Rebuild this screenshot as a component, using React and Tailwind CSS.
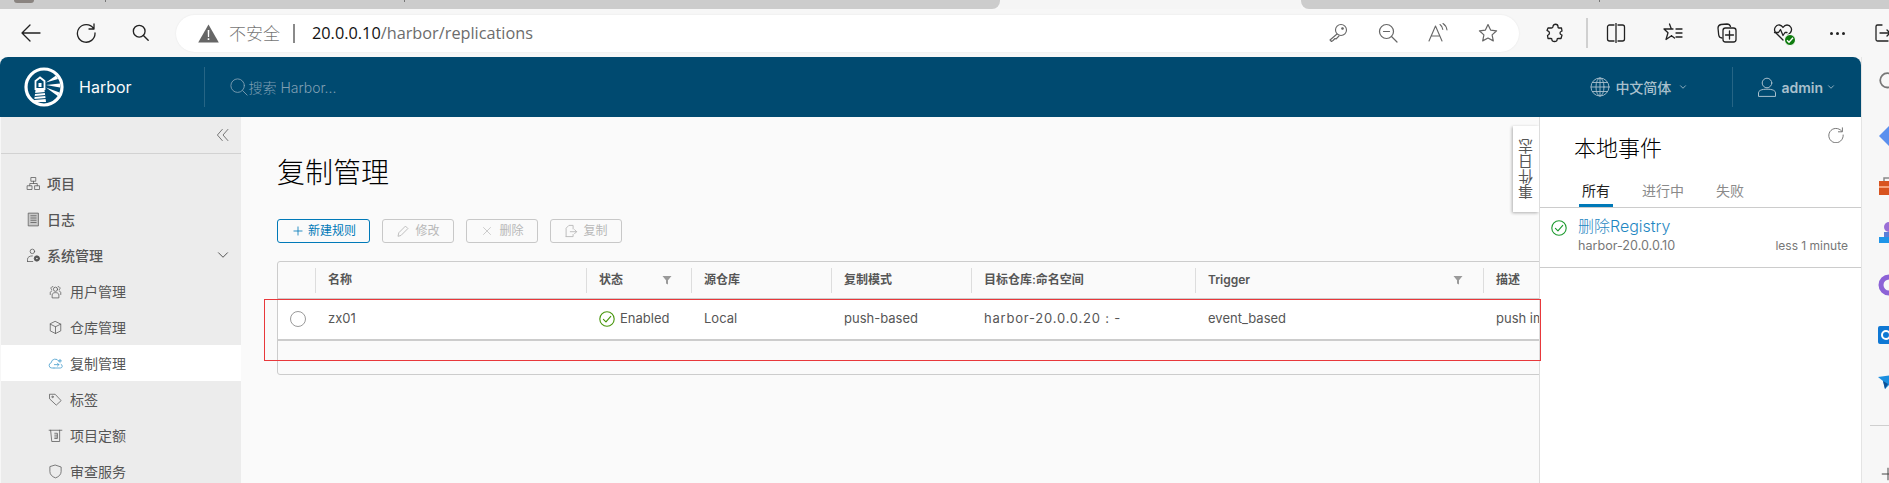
import { ChevronDown, Plus, X } from 'lucide-react';

const Ic = ({ size = 20, className = '', sw = 1.3, children }) => (
  <svg
    width={size}
    height={size}
    viewBox="0 0 20 20"
    fill="none"
    stroke="currentColor"
    strokeWidth={sw}
    strokeLinecap="round"
    strokeLinejoin="round"
    className={`shrink-0 ${className}`}
  >
    {children}
  </svg>
);

const StatusCheck = ({ className }) => (
  <Ic size={16} sw={1.4} className={className}>
    <circle cx="10" cy="10" r="9" />
    <path d="M5.5 10.5l3.2 3.2 6-7" />
  </Ic>
);

const FilterIcon = ({ className = '' }) => (
  <svg width="10" height="10" viewBox="0 0 10 10" className={`shrink-0 ${className}`}>
    <path d="M0.5 1h9L6 5.2V9.5L4 8.5V5.2z" fill="#9a9a9a" />
  </svg>
);

const Logo = () => (
  <svg width="40" height="40" viewBox="0 0 40 40" className="shrink-0">
    <circle cx="20" cy="20" r="18" fill="none" stroke="#fff" strokeWidth="3.2" />
    <path d="M11.5 14l4.5-3.5 4.5 3.5v8h-9z" fill="none" stroke="#fff" strokeWidth="1.8" />
    <path d="M14.5 16h3v4h-3z" fill="#fff" />
    <path d="M11.5 23h9l1.5 12h-12z" fill="#fff" />
    <path d="M10.8 26.5l10.6-1M10.4 29.5l11.2-1M10 32.5l12-1" stroke="#004a70" strokeWidth="1.1" />
    <path d="M22 15.5L32 8.5l2 3.5zM22 18l14-1.5v4zM22 20.5l13.5 5-1.5 3.8z" fill="#fff" />
  </svg>
);

const sideItems = [
  {
    label: '项目',
    top: true,
    icon: (
      <>
        <rect x="7" y="2" width="6" height="5" />
        <rect x="2" y="13" width="6" height="5" />
        <rect x="12" y="13" width="6" height="5" />
        <path d="M10 7v3M5 13v-3h10v3" />
      </>
    ),
  },
  {
    label: '日志',
    top: true,
    icon: (
      <>
        <rect x="3.5" y="1.5" width="13" height="17" fill="#c9c9c9" />
        <path d="M6.5 5h7M6.5 8h7M6.5 11h7M6.5 14h7" />
      </>
    ),
  },
  {
    label: '系统管理',
    top: true,
    open: true,
    icon: (
      <>
        <circle cx="8.5" cy="4.5" r="3" />
        <path d="M2 18v-3c0-3 3-4.5 6.5-4.5M2 18h7" />
        <circle cx="14.5" cy="14" r="3.6" fill="#565656" />
        <circle cx="14.5" cy="14" r="1.1" fill="#ececec" stroke="none" />
      </>
    ),
  },
  {
    label: '用户管理',
    icon: (
      <>
        <circle cx="10" cy="7" r="2.8" />
        <path d="M5.5 18v-3.5c0-2 2-3 4.5-3s4.5 1 4.5 3V18z" />
        <path d="M6.5 3.5a2.3 2.3 0 0 0-1.8 4M13.500 3.500a2.3 2.3 0 0 1 1.800 4M3 14v-2.500c0-1 .8-1.800 2-2.200M17 14v-2.500c0-1-.8-1.800-2-2.200" />
      </>
    ),
  },
  {
    label: '仓库管理',
    icon: (
      <>
        <path d="M10 2l7 3.500v9L10 18l-7-3.500v-9z" />
        <path d="M3 5.500l7 3.500 7-3.500M10 9v9" />
      </>
    ),
  },
  {
    label: '复制管理',
    active: true,
    icon: (
      <>
        <path d="M8 16H5a3.500 3.500 0 0 1-.8-6.900A5.500 5.500 0 0 1 14.500 7" />
        <path d="M8 16h8.500a2.500 2.500 0 0 0 1-4.800" />
        <path d="M8.500 11.500h6M12.500 9.500l2 2-2 2M14 6.500h4M16 4.500v4" />
      </>
    ),
  },
  {
    label: '标签',
    icon: (
      <>
        <path d="M2.500 3h7l8 8.500-6.500 6-8.500-8z" />
        <circle cx="6" cy="6.500" r="1" />
      </>
    ),
  },
  {
    label: '项目定额',
    icon: (
      <>
        <path d="M1.500 3h17M3.500 3l1.500 15h10.500V3" />
        <path d="M9 7h3.500v7H9M9 9.500h3M9 12h3" />
      </>
    ),
  },
  {
    label: '审查服务',
    icon: <path d="M10 1.500l7.500 2.500v6c0 4-3 7-7.500 8.500C5.500 17 2.500 14 2.500 10V4z" />,
  },
];

const columns = [
  { w: 271, label: '名称', cell: 'zx01' },
  { w: 105, label: '状态', filter: 'mr-[19px]', status: true },
  { w: 140, label: '源仓库', cell: 'Local' },
  { w: 140, label: '复制模式', cell: 'push-based' },
  { w: 224, label: '目标仓库:命名空间', cell: 'harbor-20.0.0.20 : -', cellClass: 'tracking-[0.8px]' },
  { w: 288, label: 'Trigger', filter: 'mr-[20px]', cell: 'event_based' },
  { w: 200, label: '描述', cell: 'push images' },
];

const actions = [
  {
    label: '修改',
    icon: (
      <Ic size={14}>
        <path d="M3 17l1-4.500L13.500 3l3.500 3.500L7.500 16z" />
      </Ic>
    ),
  },
  { label: '删除', icon: <X size={14} strokeWidth={1.2} /> },
  {
    label: '复制',
    icon: (
      <Ic size={14}>
        <path d="M3 18V6l4-4h6v5M3 18h10v-3M9 11h9M15 8l3 3-3 3" />
      </Ic>
    ),
  },
];

function Toolbar() {
  return (
    <div className="h-[48px] flex items-center bg-[#f7f7f7] pl-[21px] text-[#222]">
      <Ic>
        <path d="M19 10H1.500M9 2l-8 8 8 8" />
      </Ic>
      <Ic className="ml-[35px]">
        <path d="M17.500 5.500A8.800 8.800 0 1 0 19 10M18 1v5h-5" />
      </Ic>
      <Ic size={18} sw={1.5} className="ml-[36px]">
        <circle cx="8" cy="8" r="6.500" />
        <path d="M12.700 12.700L18 18" />
      </Ic>
      <div className="ml-[26px] w-[1343px] h-[37px] shrink-0 flex items-center rounded-full bg-white pl-[22px] pr-[21px] shadow-[0_0_2px_rgba(0,0,0,0.08)]">
        <svg width="21" height="19" viewBox="0 0 21 19" className="shrink-0">
          <path d="M10.500 0.500L20.800 18.500H0.200z" fill="#666" />
          <path d="M9.700 6h1.600l-.2 7H9.900zM9.700 14.300h1.600v1.700H9.700z" fill="#fff" />
        </svg>
        <span className="ml-[10px] text-[17px] text-[#767676] font-['Noto_Sans_CJK_SC'] font-light">不安全</span>
        <span className="ml-[13px] w-[2px] h-[19px] bg-[#8a8a8a]" />
        <span className="ml-[17px] text-[16.3px] font-['Open_Sans'] text-[#6c6c6c]">
          <span className="text-[#111]">20.0.0.10</span>/harbor/replications
        </span>
        <div className="ml-auto flex items-center gap-[30px] text-[#666]">
          <Ic sw={1.1}>
            <circle cx="13" cy="7" r="5.500" />
            <circle cx="14.500" cy="5.500" r=".8" fill="currentColor" />
            <path d="M9 11l-7 6 1.500 1.500L5 17.500l1-1 1-1 1 .5 3-3" />
          </Ic>
          <Ic sw={1.2}>
            <circle cx="8.500" cy="8.500" r="7" />
            <path d="M5.500 8.500h6M13.500 13.500L19 19" />
          </Ic>
          <Ic sw={1.1}>
            <path d="M1 18L7.500 3 14 18M3.500 13h8M12 1.500c1.500 1 2.500 2.500 2.800 5M15 .5c2 1.300 3.500 3.500 4 6.500" />
          </Ic>
          <Ic sw={1.2}>
            <path d="M10 1.500l2.600 5.600 6 .7-4.500 4.100 1.200 6L10 15l-5.300 2.900 1.200-6L1.400 7.800l6-.7z" />
          </Ic>
        </div>
      </div>
      <Ic className="ml-[26px]">
        <path d="M8 3.500c0-3 5-3 5 0 0 1 0 1.500 1 1.500h2.500l.5 3c-1 .5-2 .5-2 2s1 1.500 2 2l-1 3.500h-3c-1 0-1 1-1 1.500 0 2-5 2-5 0 0-.5 0-1.500-1-1.500H3l-.5-3c1-.5 2-1 2-2.500s-1.500-2-2.500-2.500L3 5h3.500C7.500 5 8 4.500 8 3.500z" />
      </Ic>
      <span className="ml-[21px] w-[2px] h-[30px] bg-[#d0d0d0] shrink-0" />
      <Ic className="ml-[18px]">
        <path d="M8 2H3.500a2 2 0 0 0-2 2v12a2 2 0 0 0 2 2H8M12 2h4.500a2 2 0 0 1 2 2v12a2 2 0 0 1-2 2H12M10 0v20" />
      </Ic>
      <Ic className="ml-[37px]">
        <path d="M6.500 1L8.400 6H1L5 9.800 3 16.500l5.500-3.800M8.400 6H10M8.500 12.700l3 2.300" />
        <path d="M13 6h6M13 10h6M13 14h6" />
      </Ic>
      <Ic className="ml-[34px]">
        <path d="M5 15c-2 0-3-1-3.300-3L1 5c0-2 1-3 3-3.500l6-.5c2 0 3 1 3.500 2.500" />
        <rect x="6" y="5" width="13" height="14" rx="2.500" />
        <path d="M12.500 8v8M8.500 12h8" />
      </Ic>
      <div className="ml-[36px] relative w-5 h-5 shrink-0">
        <Ic>
          <path d="M10 17L2.500 9.500C0 6 3 1.500 6.500 2c1.500.2 2.700 1 3.500 2.500C11 3 12.500 2 14 2c3.500 0 6 4 3.500 7.500L15 12" />
          <path d="M1.500 9.500h4l2-3 2.500 6 2-3h2" />
        </Ic>
        <span className="absolute left-[11px] top-[11px] w-[12px] h-[12px] rounded-full bg-[#107c10] border border-white flex items-center justify-center">
          <svg width="8" height="8" viewBox="0 0 8 8">
            <path d="M1 4.200l2 2 4-4.400" fill="none" stroke="#fff" strokeWidth="1.400" />
          </svg>
        </span>
      </div>
      <div className="ml-[34px] w-5 flex justify-center gap-[3px] shrink-0">
        <span className="w-[3px] h-[3px] rounded-full bg-[#222]" />
        <span className="w-[3px] h-[3px] rounded-full bg-[#222]" />
        <span className="w-[3px] h-[3px] rounded-full bg-[#222]" />
      </div>
      <Ic className="ml-[27px]">
        <path d="M8 2H3.500A1.500 1.500 0 0 0 2 3.500v13A1.500 1.500 0 0 0 3.500 18H14M6 10h10M13 7l3 3-3 3" />
      </Ic>
    </div>
  );
}

function Header() {
  return (
    <header className="h-[60px] flex items-center bg-[#004a70] rounded-t-lg">
      <div className="ml-[24px] flex items-center">
        <Logo />
        <span className="ml-[15px] text-[16px] text-[#fafafa]">Harbor</span>
      </div>
      <span className="ml-[72px] w-px h-[40px] bg-white/15" />
      <div className="ml-[25px] flex items-center text-[#7f9fb3]">
        <Ic size={18} sw={1}>
          <circle cx="8.500" cy="8.500" r="7.500" />
          <path d="M14 14l5 5" />
        </Ic>
        <span className="ml-[1px] text-[14px] font-light">搜索 Harbor...</span>
      </div>
      <div className="ml-auto flex items-center text-[#a9c0cd]">
        <Ic sw={0.9}>
          <circle cx="10" cy="10" r="9" />
          <ellipse cx="10" cy="10" rx="4" ry="9" />
          <path d="M10 1v18M1 10h18M2.500 5.500h15M2.500 14.500h15" />
        </Ic>
        <span className="ml-[5px] text-[14px] font-medium">中文简体</span>
        <ChevronDown size={10} className="ml-[7px]" />
        <span className="ml-[44px] w-px h-[40px] bg-white/15" />
        <Ic className="ml-[24px]" sw={1}>
          <circle cx="10" cy="6" r="4.800" />
          <path d="M1.500 19v-3c0-2.500 3-3.800 8.500-3.800s8.500 1.300 8.500 3.800v3z" />
        </Ic>
        <span className="ml-[4px] text-[14px] font-semibold">admin</span>
        <ChevronDown size={10} className="ml-[3px] mr-[25px]" />
      </div>
    </header>
  );
}

function Sidebar() {
  return (
    <aside className="w-[240px] shrink-0 bg-[#ececec] ml-px">
      <div className="h-[37px] flex items-center justify-end pr-[11px] border-b border-[#d2d2d2] text-[#444]">
        <Ic size={14} sw={1}>
          <path d="M9 2L2 10l7 8M17 2l-7 8 7 8" />
        </Ic>
      </div>
      <nav className="pt-[11px]">
        {sideItems.map((item) => (
          <div
            key={item.label}
            className={`h-9 flex items-center text-[14px] ${item.top ? 'pl-[25px] font-medium' : 'pl-[47px]'} ${
              item.active ? 'bg-white' : ''
            } text-[#565656]`}
          >
            <Ic size={15} sw={1} className={item.active ? 'text-[#3a96c8]' : ''}>
              {item.icon}
            </Ic>
            <span className={item.top ? 'ml-[6px]' : 'ml-[7px]'}>{item.label}</span>
            {item.open && <ChevronDown size={18} strokeWidth={1.2} className="ml-auto mr-[9px] text-[#444]" />}
          </div>
        ))}
      </nav>
    </aside>
  );
}

function Main() {
  return (
    <main className="flex-1 min-w-0 relative overflow-hidden bg-[#fafafa] pl-[36px] pt-[38px]">
      <h1 className="text-[28px] leading-[36px] font-light text-black">复制管理</h1>

      <div className="mt-[28px] flex gap-[12px] text-[12px]">
        <button type="button" className="w-[93px] h-[24px] flex items-center justify-center gap-[3px] rounded-[3px] border border-[#0079b8] text-[#0079b8]">
          <Plus size={14} strokeWidth={1.4} />
          新建规则
        </button>
        {actions.map((a) => (
          <button
            key={a.label}
            type="button"
            disabled
            className="w-[72px] h-[24px] flex items-center justify-center gap-[5px] rounded-[3px] border border-[#c8c8c8] text-[#b8b8b8]"
          >
            {a.icon}
            {a.label}
          </button>
        ))}
      </div>

      <div className="mt-[18px] w-[1400px] rounded-[3px] border border-[#ccc] text-[#565656]">
        <div className="h-[37px] flex items-center border-b border-[#ccc] text-[12px] font-semibold">
          <div className="w-[37px] shrink-0" />
          {columns.map((c) => (
            <div key={c.label} style={{ width: c.w }} className="h-[25px] shrink-0 flex items-center border-l border-[#ddd] pl-[12px]">
              {c.label}
              {c.filter && <FilterIcon className={`ml-auto ${c.filter}`} />}
            </div>
          ))}
        </div>
        <div className="h-[42px] flex items-center bg-white border-b-2 border-[#ccc] text-[13px]">
          <div className="w-[37px] shrink-0 flex justify-center pl-[3px]">
            <span className="w-[16px] h-[16px] rounded-full border border-[#9a9a9a]" />
          </div>
          {columns.map((c) => (
            <div key={c.label} style={{ width: c.w }} className={`shrink-0 flex items-center pl-[13px] whitespace-nowrap overflow-hidden ${c.cellClass || ''}`}>
              {c.status ? (
                <>
                  <StatusCheck className="text-[#48960c]" />
                  <span className="ml-[5px]">Enabled</span>
                </>
              ) : (
                c.cell
              )}
            </div>
          ))}
        </div>
        <div className="h-[33px]" />
      </div>

      <div className="absolute right-0 top-[9px] w-[26px] h-[86px] flex items-center justify-center pl-[1px] bg-white shadow-[-1px_1px_3px_rgba(0,0,0,0.3)]">
        <span className="[writing-mode:vertical-rl] rotate-180 text-[15px] leading-none text-[#565656]">事件日志</span>
      </div>
    </main>
  );
}

function EventsPanel() {
  return (
    <section className="w-[322px] shrink-0 relative bg-white border-l border-[#ddd] pt-[17px]">
      <Ic size={16} sw={1} className="absolute top-[10px] right-[17px] text-[#555]">
        <path d="M17 5a9 9 0 1 0 2 5M18 1v5h-5" />
      </Ic>
      <h2 className="pl-[34px] text-[22px] leading-[28px] font-light text-black">本地事件</h2>
      <div className="mt-[13px] h-[33px] flex gap-[26px] pl-[39px] border-b border-[#ccc] text-[14px] text-[#8a8a8a]">
        <span className="h-[32px] px-[3px] pt-[1px] flex items-center border-b-[3px] border-[#0079b8] text-[#222]">所有</span>
        <span className="h-[32px] px-[3px] pt-[1px] flex items-center border-b-[3px] border-transparent">进行中</span>
        <span className="h-[32px] px-[3px] pt-[1px] flex items-center border-b-[3px] border-transparent">失败</span>
      </div>
      <div className="h-[60px] flex gap-[11px] pl-[11px] pr-[13px] border-b border-[#ccc]">
        <StatusCheck className="mt-[12px] text-[#1d9a2f]" />
        <div className="flex-1 pt-[8px]">
          <div className="text-[16px] font-light leading-5 text-[#1f87c2]">删除Registry</div>
          <div className="flex justify-between text-[12px] leading-5 text-[#777]">
            <span className="text-[12.6px]">harbor-20.0.0.10</span>
            <span>less 1 minute</span>
          </div>
        </div>
      </div>
    </section>
  );
}

function BrowserRail() {
  return (
    <div className="flex-1 min-w-0 flex flex-col pl-[16px] pt-[14px] border-l border-[#e4e4e4] bg-[#f7f7f7]">
      <Ic size={22} sw={1.6} className="text-[#777]">
        <circle cx="8.500" cy="8.500" r="6.500" />
      </Ic>
      <svg width="22" height="22" viewBox="0 0 22 22" className="mt-[32px] shrink-0">
        <path d="M11 1L21 11 11 21 1 11z" fill="#5b90ee" />
      </svg>
      <svg width="22" height="22" viewBox="0 0 22 22" className="mt-[28px] shrink-0">
        <path d="M6 6V3h10v3" fill="none" stroke="#8a8a8a" strokeWidth="1.500" />
        <rect x="1" y="6" width="20" height="14" fill="#d8531f" />
        <rect x="1" y="11" width="20" height="2" fill="#f6a27a" />
      </svg>
      <svg width="22" height="22" viewBox="0 0 22 22" className="mt-[25px] shrink-0">
        <circle cx="11" cy="5" r="5" fill="#9a6fd6" />
        <path d="M6 10h10v5H6z" fill="#5a7fd8" />
        <path d="M1 15h20v6H1z" fill="#1f95e8" />
      </svg>
      <svg width="22" height="22" viewBox="0 0 22 22" className="mt-[30px] shrink-0">
        <circle cx="11" cy="11" r="8" fill="none" stroke="#8c62d6" strokeWidth="5" />
        <path d="M11 1a10 10 0 0 1 8 4l-4 3z" fill="#3a8fe0" />
      </svg>
      <svg width="22" height="22" viewBox="0 0 22 22" className="mt-[28px] shrink-0">
        <rect x="0" y="2" width="22" height="18" rx="2" fill="#0f78d4" />
        <circle cx="8" cy="11" r="4" fill="none" stroke="#fff" strokeWidth="2" />
      </svg>
      <svg width="22" height="22" viewBox="0 0 22 22" className="mt-[26px] shrink-0">
        <path d="M0 5l22-3-15 15-2-8z" fill="#1b8fe0" />
        <path d="M5 9l2 8 3-5z" fill="#0f4f94" />
      </svg>
      <div className="mt-[31px] -ml-[8px] h-px w-[40px] shrink-0 bg-[#cfcfcf]" />
      <Plus size={20} strokeWidth={1.2} className="mt-[38px] shrink-0 text-[#444]" />
    </div>
  );
}

export default function App() {
  return (
    <div className="relative w-[1889px] h-[483px] overflow-hidden bg-[#f7f7f7] font-[Inter,'Noto_Sans_CJK_SC',sans-serif]">
      <div className="h-[9px] flex">
        <div className="w-[1000px] flex items-start rounded-br-lg bg-[#cccccc]">
          <span className="ml-[14px] w-[20px] h-[3px] rounded-b-full bg-[#8a8480]" />
          <span className="ml-[71px] w-px h-[2px] bg-[#777]" />
          <span className="ml-[298px] w-px h-[2px] bg-[#777]" />
        </div>
        <div className="w-[301px] bg-[#f5f5f5]" />
        <div className="flex-1 flex items-start rounded-bl-lg bg-[#cccccc]">
          <span className="ml-[298px] w-px h-[2px] bg-[#777]" />
        </div>
      </div>
      <Toolbar />
      <div className="flex h-[426px]">
        <div className="w-[1861px] shrink-0 flex flex-col">
          <Header />
          <div className="flex h-[366px]">
            <Sidebar />
            <Main />
            <EventsPanel />
          </div>
        </div>
        <BrowserRail />
      </div>
      {/* red annotation box from the screenshot */}
      <div className="absolute left-[264px] top-[299px] w-[1277px] h-[62px] border border-[#e8383b]" />
    </div>
  );
}
